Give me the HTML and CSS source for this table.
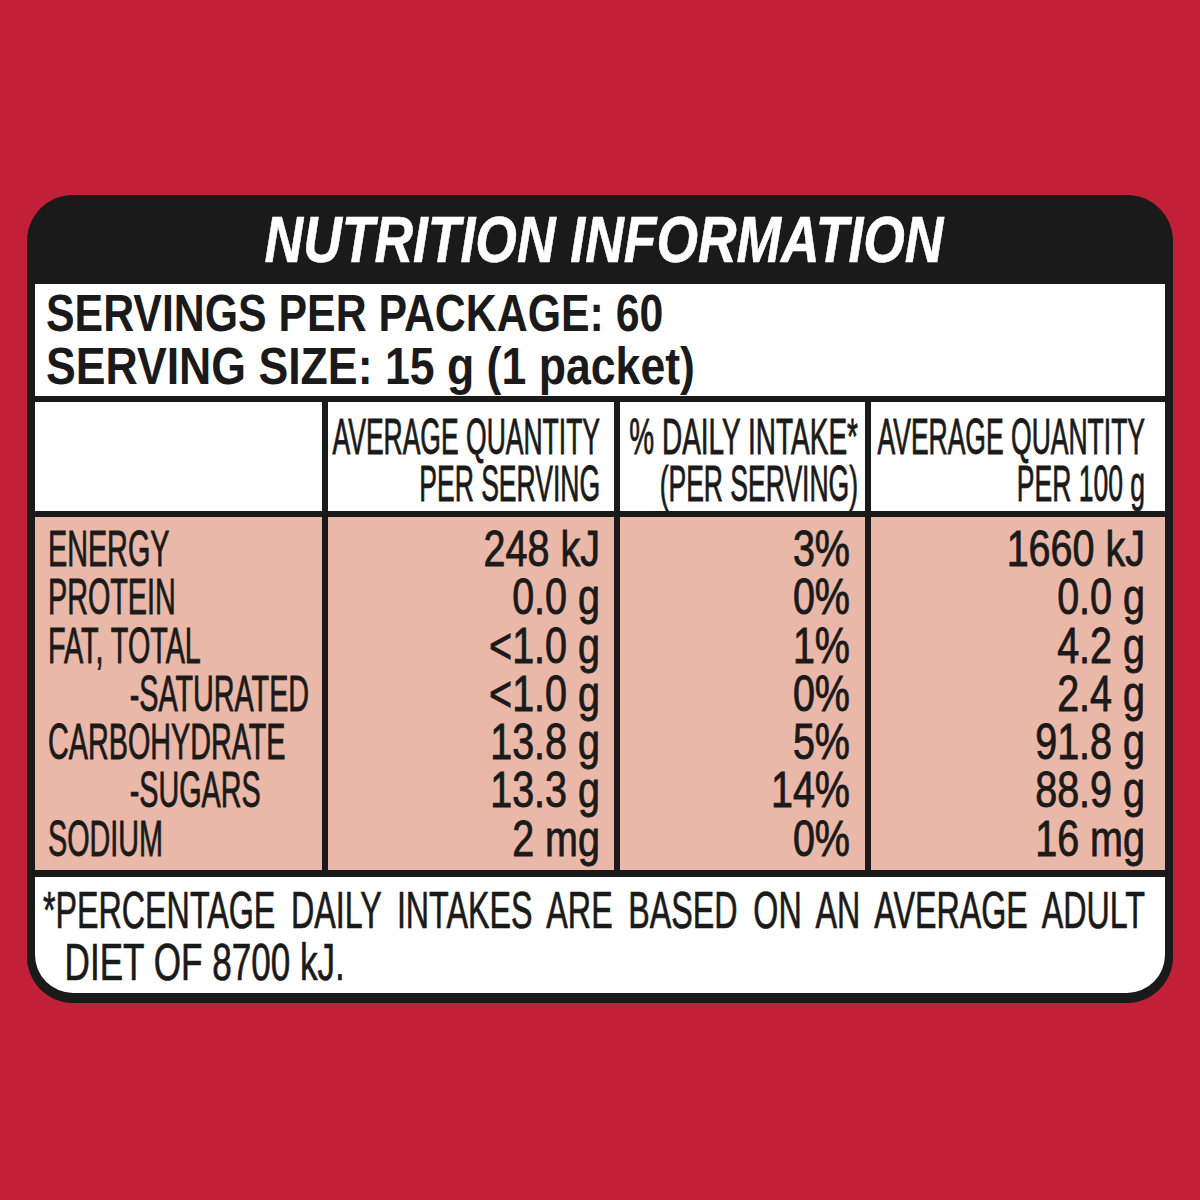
FILE: index.html
```html
<!DOCTYPE html>
<html lang="en">
<head>
<meta charset="utf-8">
<title>Nutrition Information</title>
<link rel="stylesheet" href="styles.css">
</head>
<body>
<div class="page">
  <div class="panel">
    <div class="title"><div class="sq s-title">NUTRITION INFORMATION</div></div>
    <div class="sheet">
      <div class="servings">
        <div class="sq s-srv1">SERVINGS PER PACKAGE: 60</div>
        <div class="sq s-srv2">SERVING SIZE: 15 g (1 packet)</div>
      </div>
      <div class="grid">
        <div class="cell head"></div>
        <div class="cell head num c2">
          <div class="sq s-head">AVERAGE QUANTITY</div>
          <div class="sq s-head">PER SERVING</div>
        </div>
        <div class="cell head num c3h">
          <div class="sq s-head3">% DAILY INTAKE*</div>
          <div class="sq s-head">(PER SERVING)</div>
        </div>
        <div class="cell head num c4">
          <div class="sq s-head">AVERAGE QUANTITY</div>
          <div class="sq s-head">PER 100 g</div>
        </div>

        <div class="cell data label">
          <div class="sq s-label">
            <div>ENERGY</div>
            <div>PROTEIN</div>
            <div>FAT, TOTAL</div>
            <div class="ind">-SATURATED</div>
            <div>CARBOHYDRATE</div>
            <div class="ind">-SUGARS</div>
            <div>SODIUM</div>
          </div>
        </div>
        <div class="cell data num c2">
          <div class="sq s-num">
            <div>248 kJ</div>
            <div>0.0 g</div>
            <div>&lt;1.0 g</div>
            <div>&lt;1.0 g</div>
            <div>13.8 g</div>
            <div>13.3 g</div>
            <div>2 mg</div>
          </div>
        </div>
        <div class="cell data num c3">
          <div class="sq s-num">
            <div>3%</div>
            <div>0%</div>
            <div>1%</div>
            <div>0%</div>
            <div>5%</div>
            <div>14%</div>
            <div>0%</div>
          </div>
        </div>
        <div class="cell data num c4">
          <div class="sq s-num">
            <div>1660 kJ</div>
            <div>0.0 g</div>
            <div>4.2 g</div>
            <div>2.4 g</div>
            <div>91.8 g</div>
            <div>88.9 g</div>
            <div>16 mg</div>
          </div>
        </div>
      </div>
      <div class="foot">
        <div class="sq s-foot1 fl1">*PERCENTAGE DAILY INTAKES ARE BASED ON AN AVERAGE ADULT</div>
        <div class="sq s-foot2 fl2">DIET OF 8700 kJ.</div>
      </div>
    </div>
  </div>
</div>
</body>
</html>
```

FILE: styles.css
```css
html, body {
  margin: 0;
  padding: 0;
}

body {
  background: #c21f39;
  min-height: 1200px;
  font-family: "Liberation Sans", Arial, sans-serif;
  color: #1b1a1a;
}

.page {
  padding: 195px 0 0 27px;
}

.panel {
  width: 1146px;
  height: 808px;
  box-sizing: border-box;
  background: #1b1a1a;
  border-radius: 46px;
  padding: 0 8px 10px 8px;
  display: flex;
  flex-direction: column;
}

/* horizontally condensed text: laid out wide, then squeezed */
.sq {
  width: calc(100% / var(--s));
  transform: scaleX(var(--s));
  transform-origin: 0 0;
  white-space: nowrap;
}

.s-title { --s: 0.835; }
.s-srv1 { --s: 0.84; }
.s-srv2 { --s: 0.875; }
.s-head { --s: 0.53; }
.s-head3 { --s: 0.56; }
.s-label { --s: 0.575; }
.s-num { --s: 0.79; }
.s-foot1 { --s: 0.62; }
.s-foot2 { --s: 0.675; }

.title {
  height: 89px;
  box-sizing: border-box;
  padding: 2px 0 0 8px;
  line-height: 87px;
  font-size: 64px;
  font-weight: bold;
  font-style: italic;
  color: #ffffff;
  text-align: center;
  -webkit-text-stroke: 0.6px #ffffff;
}

.sheet {
  flex: 1;
  background: #ffffff;
  border-radius: 0 0 38px 38px;
  overflow: hidden;
  display: flex;
  flex-direction: column;
}

.servings {
  height: 112px;
  box-sizing: border-box;
  padding: 3px 0 0 11px;
  font-size: 51px;
  line-height: 53px;
  font-weight: bold;
}

.grid {
  display: grid;
  grid-template-columns: 287px 286px 245px 294px;
  grid-template-rows: 109px 353px;
  gap: 6px;
  background: #1b1a1a;
  border-top: 6px solid #1b1a1a;
  border-bottom: 7px solid #1b1a1a;
}

.cell {
  box-sizing: border-box;
  overflow: hidden;
  -webkit-text-stroke: 0.9px #1b1a1a;
}

.head {
  background: #ffffff;
  padding-top: 12px;
  font-size: 50px;
  line-height: 47px;
}

.data {
  background: #e9b8a8;
  padding-top: 8px;
  font-size: 50px;
  line-height: 48.3px;
}

.num {
  text-align: right;
}

.label {
  padding-left: 13px;
}

.ind {
  padding-left: 142px;
}

.c2 { padding-right: 14px; }
.c3 { padding-right: 15px; }
.c3h { padding-right: 7px; }
.c4 { padding-right: 20px; }

.foot {
  flex: 1;
  box-sizing: border-box;
  padding: 7px 20px 0 8px;
  font-size: 52px;
  line-height: 52px;
  -webkit-text-stroke: 0.7px #1b1a1a;
}

.fl1 {
  text-align: justify;
  text-align-last: justify;
}

.fl2 {
  padding-left: 32px;
}
```
